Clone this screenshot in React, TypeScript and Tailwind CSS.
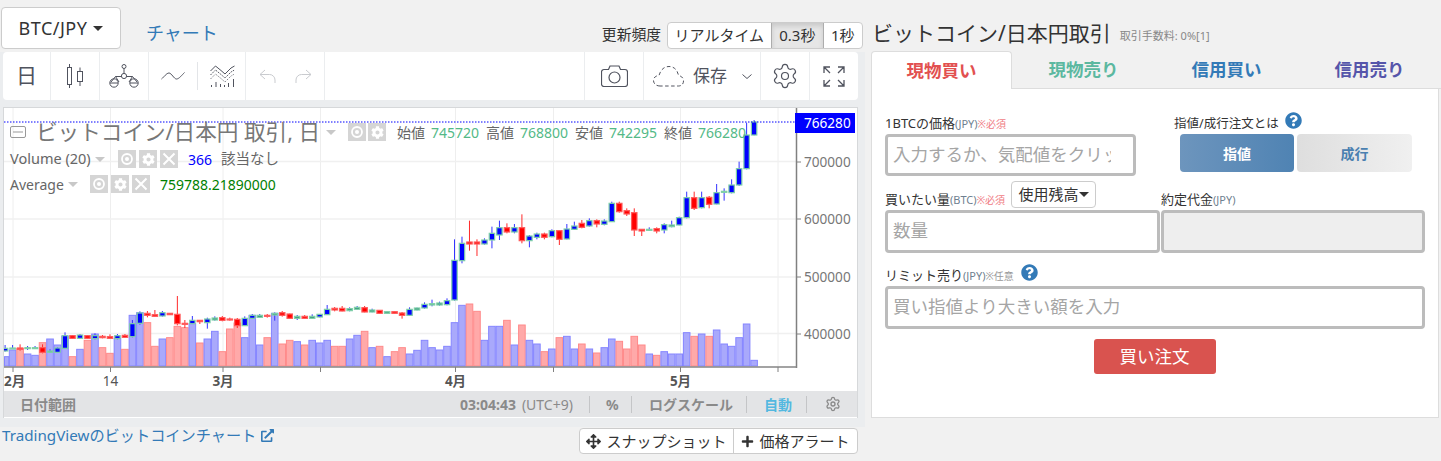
import { Settings } from "lucide-react";
import { FaArrowsAlt, FaCog, FaExternalLinkAlt, FaPlus, FaQuestionCircle } from "react-icons/fa";

// volume bars: top in 3x crop units (baseline 468), r = red
const volumes: [number, number][] = [
  [440,0],[420,0],[415,1],[432,0],[436,0],[398,1],[387,0],[405,0],[378,0],[440,1],[418,0],[391,1],[372,0],[413,1],[430,1],[385,0],[418,1],
  [316,0],[308,0],[338,1],[409,1],[387,0],[383,1],[349,1],[353,1],[341,0],[399,1],[387,0],[364,0],[425,1],[357,1],[339,1],[383,0],[316,0],
  [405,0],[383,1],[310,0],[402,1],[391,1],[395,0],[405,1],[391,0],[399,0],[391,0],[409,1],[409,1],[387,0],[376,0],[364,1],[413,0],[409,1],
  [440,0],[425,1],[413,1],[432,0],[421,0],[391,0],[413,0],[420,0],[409,0],[338,0],[286,0],[282,1],[304,1],[391,0],[349,0],[349,0],[331,1],
  [405,0],[345,1],[391,0],[402,0],[425,1],[417,0],[383,1],[379,0],[417,0],[402,1],[417,0],[429,1],[413,0],[387,0],[394,1],[417,1],[379,1],
  [405,1],[432,0],[436,1],[425,0],[432,0],[432,0],[368,0],[379,1],[372,0],[379,1],[360,0],[402,0],[409,0],[383,0],[342,0],[451,0],
];

// candles: body top, body bottom, wick top, wick bottom, up
const candles: [number, number, number, number, number][] = [
  [415,423,405,425,1],[414,416,405,417,1],[414,418,403,422,0],[413,415,408,420,1],[413,415,408,416,1],[413,427,403,430,0],[423,427,418,428,1],[414,427,412,428,1],
  [377,415,367,416,1],[377,385,375,386,0],[375,385,372,386,1],[377,385,376,386,0],[377,386,370,388,1],[379,383,375,385,0],[380,385,373,386,0],[377,386,372,388,1],
  [376,382,372,384,0],[341,380,330,382,1],[309,340,304,344,1],[310,316,303,322,0],[314,319,300,320,0],[308,318,303,320,1],[310,314,309,315,0],[313,341,258,346,0],
  [340,343,330,354,0],[331,341,318,342,1],[331,335,330,342,0],[327,338,323,356,1],[324,330,319,332,1],[323,331,318,334,0],[327,330,323,332,0],[328,347,324,354,0],
  [325,347,319,348,1],[316,325,312,326,1],[316,322,312,323,1],[316,319,312,323,0],[310,315,307,332,1],[308,316,303,320,0],[312,325,311,326,0],[319,325,315,330,1],
  [319,325,315,326,0],[319,325,313,326,1],[313,321,312,322,1],[298,314,285,315,1],[295,300,291,304,0],[295,303,288,304,0],[296,302,292,304,1],[292,298,288,300,1],
  [293,306,288,307,0],[300,306,296,307,1],[301,310,300,311,0],[305,310,304,311,1],[305,310,304,311,0],[309,316,306,326,0],[298,316,292,318,1],[294,300,293,301,1],
  [283,294,277,296,1],[281,285,269,289,1],[279,285,275,287,1],[272,284,265,286,1],[151,270,88,272,1],[100,152,80,160,1],[96,102,32,122,0],[96,102,88,138,0],
  [90,102,85,104,1],[70,90,50,115,1],[53,75,32,90,1],[53,66,40,70,0],[53,66,42,70,1],[53,92,13,100,0],[78,92,75,112,1],[72,82,68,88,1],[72,82,68,88,0],
  [62,80,58,82,1],[62,88,60,105,0],[57,87,42,88,1],[48,58,35,60,1],[40,52,30,55,0],[32,48,25,50,1],[32,42,28,52,0],[33,43,28,46,1],[-20,35,-25,36,1],
  [-20,5,-25,8,0],[2,12,-5,18,0],[8,60,-5,78,0],[58,63,58,78,0],[58,60,52,62,1],[56,63,52,70,0],[44,60,40,70,1],[45,50,32,52,1],[23,45,20,46,1],[-37,23,-55,25,1],
  [-37,-5,-55,0,0],[-37,-7,-55,-5,1],[-38,-17,-42,-5,0],[-52,-18,-78,-17,1],[-56,-54,-65,-28,1],[-75,-52,-92,-50,1],[-124,-75,-145,-72,1],[-225,-124,-262,-122,1],[-264,-225,-270,-224,1],
];

const toY = (z: number) => 210 + z / 3;
const toX = (i: number) => 5.1 + 7.49 * i;

const gridX = [13, 110.5, 223, 320.5, 455.5, 553.5, 680.5, 778];
const gridY = [161.5, 219, 277, 333.5];
const prices = [
  { label: "700000", y: 162 },
  { label: "600000", y: 219 },
  { label: "500000", y: 277 },
  { label: "400000", y: 334 },
];
const months = [
  { label: "2月", x: 14.6, bold: true },
  { label: "14", x: 110.5, bold: false },
  { label: "3月", x: 223, bold: true },
  { label: "4月", x: 455.5, bold: true },
  { label: "5月", x: 680.5, bold: true },
];

function Chart() {
  return (
    <svg viewBox="4 108 853 283" className="block h-[283px] w-[853px]">
      {gridX.map((x) => (
        <line key={x} x1={x} x2={x} y1={108} y2={367} stroke="#eeeeee" strokeWidth={1} />
      ))}
      {gridY.map((y) => (
        <line key={y} x1={4} x2={796} y1={y} y2={y} stroke="#f0f0f0" strokeWidth={1.5} />
      ))}
      {volumes.map(([top, red], i) => (
        <rect
          key={i}
          x={Math.max(toX(i) - 3.3, 4.5)}
          width={i === 0 ? 4.5 : 6.6}
          y={toY(top)}
          height={366 - toY(top)}
          fill={red ? "#ffa9a9" : "#a9a9fb"}
          stroke={red ? "#ff8a8a" : "#8585ff"}
          strokeWidth={1}
        />
      ))}
      {candles.map(([top, bottom, wickTop, wickBottom, up], i) => (
        <g key={i}>
          <line
            x1={toX(i)}
            x2={toX(i)}
            y1={toY(wickTop)}
            y2={toY(wickBottom)}
            stroke={up ? "#3333ff" : "#ff2a2a"}
            strokeWidth={1}
          />
          <rect
            x={toX(i) - 2.7}
            width={5.4}
            y={toY(top)}
            height={Math.max((bottom - top) / 3, 1)}
            fill={up ? (bottom - top <= 7 ? "#2f8f78" : "#0000ff") : "#ff0000"}
            stroke={up ? "#7fd0a8" : "#ff5a5a"}
            strokeWidth={1.2}
          />
        </g>
      ))}
      <line x1={4} x2={796} y1={122} y2={122} stroke="#0000ff" strokeWidth={1} strokeDasharray="1.5 1.5" />
      <line x1={796.5} x2={796.5} y1={108} y2={368} stroke="#808080" strokeWidth={1.5} />
      <line x1={4} x2={797} y1={367} y2={367} stroke="#858585" strokeWidth={1.5} />
      {gridX.map((x) => (
        <line key={x} x1={x} x2={x} y1={367} y2={372} stroke="#808080" strokeWidth={1} />
      ))}
      {prices.map((p) => (
        <g key={p.label}>
          <line x1={797} x2={801} y1={p.y} y2={p.y} stroke="#808080" strokeWidth={1} />
          <text x={804} y={p.y + 5} fontSize={13.6} fill="#777777">
            {p.label}
          </text>
        </g>
      ))}
      <rect x={795} y={113} width={60} height={20} fill="#0000ff" />
      <text x={804} y={128} fontSize={13.6} fill="#ffffff">
        766280
      </text>
      {months.map((m) => (
        <text
          key={m.label}
          x={m.x}
          y={386}
          fontSize={13.5}
          textAnchor="middle"
          fontWeight={m.bold ? 700 : 400}
          fill="#555555"
        >
          {m.label}
        </text>
      ))}
    </svg>
  );
}

function Eye() {
  return (
    <svg viewBox="0 0 18 18" className="h-[18px] w-[18px]">
      <circle cx={9} cy={9} r={5} fill="none" stroke="#ffffff" strokeWidth={1.8} />
      <circle cx={9} cy={9} r={2} fill="#ffffff" />
    </svg>
  );
}

function Cross() {
  return (
    <svg viewBox="0 0 18 18" className="h-[18px] w-[18px]">
      <path d="M3.5 3.5 14.5 14.5M14.5 3.5 3.5 14.5" stroke="#ffffff" strokeWidth={2} />
    </svg>
  );
}

function LegendBox({ children }: { children: React.ReactNode }) {
  return <div className="flex h-[18px] w-[18px] items-center justify-center bg-[#d5d5d5] text-white">{children}</div>;
}

function Caret({ className }: { className: string }) {
  return <span className={`h-0 w-0 border-x-[5px] border-t-[5px] border-x-transparent ${className}`} />;
}

function Ohlc({ label, value, width }: { label: string; value: string; width: string }) {
  return (
    <span className={`flex gap-[6px] text-[14px] ${width}`}>
      <span className="text-[#666666]">{label}</span>
      <span className="text-[#53b987]">{value}</span>
    </span>
  );
}

function Legend() {
  return (
    <div className="absolute top-[12px] left-[6px] whitespace-nowrap">
      <div className="flex h-[24px] items-center">
        <svg viewBox="0 0 16 12" className="h-[12px] w-[16px]">
          <rect x={0.5} y={0.5} width={15} height={11} rx={1.5} fill="none" stroke="#999999" />
          <line x1={3} x2={13} y1={6} y2={6} stroke="#999999" />
        </svg>
        <span className="ml-[10px] w-[290px] text-[21.6px] leading-[24px] text-[#777777]">ビットコイン/日本円 取引, 日</span>
        <Caret className="border-t-[#c8c8c8]" />
        <div className="ml-[12px] flex gap-[2px]">
          <LegendBox>
            <Eye />
          </LegendBox>
          <LegendBox>
            <FaCog size={13} />
          </LegendBox>
        </div>
        <div className="ml-[11px] flex">
          <Ohlc label="始値" value="745720" width="w-[89px]" />
          <Ohlc label="高値" value="768800" width="w-[89px]" />
          <Ohlc label="安値" value="742295" width="w-[89px]" />
          <Ohlc label="終値" value="766280" width="w-[89px]" />
        </div>
      </div>
      <div className="mt-[3px] flex h-[24px] items-center text-[14.5px] text-[#666666]">
        <span className="w-[85px]">Volume (20)</span>
        <Caret className="border-t-[#c8c8c8]" />
        <div className="ml-[13px] flex gap-[3px]">
          <LegendBox>
            <Eye />
          </LegendBox>
          <LegendBox>
            <FaCog size={13} />
          </LegendBox>
          <LegendBox>
            <Cross />
          </LegendBox>
        </div>
        <span className="ml-[10px] text-[14px] text-[#0000ff]">366</span>
        <span className="ml-[9px]">該当なし</span>
      </div>
      <div className="mt-[1px] flex h-[24px] items-center text-[14px] text-[#666666]">
        <span className="w-[58px]">Average</span>
        <Caret className="border-t-[#c8c8c8]" />
        <div className="ml-[12px] flex gap-[3px]">
          <LegendBox>
            <Eye />
          </LegendBox>
          <LegendBox>
            <FaCog size={13} />
          </LegendBox>
          <LegendBox>
            <Cross />
          </LegendBox>
        </div>
        <span className="ml-[10px] text-[#008000]">759788.21890000</span>
      </div>
    </div>
  );
}

function CandleIcon() {
  return (
    <svg viewBox="0 0 16 24" className="h-[24px] w-[16px]" fill="none" stroke="#50535e">
      <rect x={0.5} y={3.5} width={4} height={17} />
      <path d="M2.5 0v3.5M2.5 20.5V24" />
      <rect x={10.5} y={7.5} width={5} height={10} />
      <path d="M13 3.5v4M13 17.5V22" />
    </svg>
  );
}

function BalanceIcon() {
  return (
    <svg viewBox="0 0 30 24" className="h-[24px] w-[30px]" fill="none" stroke="#50535e">
      <circle cx={15} cy={2.5} r={2} />
      <path d="M15 4.5v5" />
      <circle cx={15} cy={12} r={2.6} />
      <path d="M12.5 12.5H6.5L2 18M6.5 12.5 10 18M17.5 12.5H23.5L20 18M23.5 12.5 28 18" />
      <circle cx={5} cy={19} r={4.2} />
      <circle cx={25} cy={19} r={4.2} />
      <path d="M1 19h8M21 19h8" />
    </svg>
  );
}

function WaveIcon() {
  return (
    <svg viewBox="0 0 24 10" className="h-[10px] w-[24px]" fill="none" stroke="#50535e">
      <path d="M0.5 8C3 6 5.5 2 8 2c2.500 0 5 6 7.500 6 2.500 0 5.500-4 8-6.500" />
    </svg>
  );
}

function IndicatorIcon() {
  return (
    <svg viewBox="0 0 25 23" className="h-[23px] w-[25px]" fill="none" stroke="#50535e">
      <path d="M0.500 6 5.500 1 11 5.500 15 9 21 3 24.500 1" />
      <path d="M0.500 10 5.500 5 11 9.500 15 13 21 7 24.500 5" strokeDasharray="1.500 1" />
      <path d="M0.500 14 5.500 9 11 13.500 15 17 21 11 24.500 9" strokeDasharray="1 1.500" />
      <path d="M1.500 22v-2M6 22v-5M10.500 22v-3M14.500 22v-2M18.500 22v-4M23.500 22v-8" />
    </svg>
  );
}

function UndoIcon({ flip }: { flip?: boolean }) {
  return (
    <svg viewBox="0 0 17 15" className={`h-[15px] w-[17px] ${flip ? "-scale-x-100" : ""}`} fill="none" stroke="#c9cbcf">
      <path d="M6 1 1 5.500 6 10M1 5.500h9.500a5.500 5.500 0 0 1 5.500 5.500v3" />
    </svg>
  );
}

function CameraIcon() {
  return (
    <svg viewBox="0 0 27 22" className="h-[22px] w-[27px]" fill="none" stroke="#50535e" strokeWidth={1.2}>
      <path d="M3 4.500h4.500L9 1h9l1.500 3.500H24a2.500 2.500 0 0 1 2.500 2.500v12a2.500 2.500 0 0 1-2.500 2.500H3A2.500 2.500 0 0 1 .500 19V7A2.500 2.500 0 0 1 3 4.500Z" />
      <circle cx={13.500} cy={12.500} r={5.500} />
    </svg>
  );
}

function CloudIcon() {
  return (
    <svg viewBox="0 0 31 21" className="h-[21px] w-[31px]" fill="none" stroke="#50535e" strokeDasharray="3.500 2.500">
      <path d="M7 20C3 20 .500 17.500 .500 14.500 .500 11.500 3 9.500 6 9.500 7.500 4 11 .500 16 .500c5 0 8.500 3.500 9.500 9 3 .5 5 2.500 5 5.500 0 3-2 5-5 5H7Z" />
    </svg>
  );
}

function ExpandIcon() {
  return (
    <svg viewBox="0 0 22 21" className="h-[21px] w-[22px]" fill="none" stroke="#50535e" strokeWidth={1.3}>
      <path d="M1 7V1h6M1 1l6 6M15 1h6v6M21 1l-6 6M1 14v6h6M1 20l6-6M21 14v6h-6M21 20l-6-6" />
    </svg>
  );
}

function Toolbar() {
  return (
    <div className="ml-[3px] flex h-[48px] w-[855px] gap-[1px] text-[#50535e]">
      <div className="flex w-[47px] items-center justify-center rounded-l bg-white text-[21px]">日</div>
      <div className="flex w-[48px] items-center justify-center bg-white">
        <CandleIcon />
      </div>
      <div className="flex w-[48px] items-center justify-center bg-white">
        <BalanceIcon />
      </div>
      <div className="flex w-[96px] items-center bg-white pl-[12px]">
        <WaveIcon />
        <div className="ml-[12px] h-[28px] w-[1px] bg-[#e3e5e8]" />
        <div className="ml-[12px]">
          <IndicatorIcon />
        </div>
      </div>
      <div className="flex w-[78px] items-center justify-center gap-[19px] bg-white">
        <UndoIcon />
        <UndoIcon flip />
      </div>
      <div className="w-[259px] bg-white" />
      <div className="flex w-[58px] items-center justify-center bg-white">
        <CameraIcon />
      </div>
      <div className="flex w-[116px] items-center bg-white pl-[9px]">
        <CloudIcon />
        <span className="ml-[9px] text-[17px]">保存</span>
        <svg viewBox="0 0 10 5" className="ml-[15px] h-[5px] w-[10px]" fill="none" stroke="#50535e">
          <path d="M.5.5 5 4.500 9.500.5" />
        </svg>
      </div>
      <div className="flex w-[48px] items-center justify-center bg-white">
        <Settings size={28} strokeWidth={1} color="#50535e" />
      </div>
      <div className="flex w-[48px] items-center justify-center rounded-r bg-white">
        <ExpandIcon />
      </div>
    </div>
  );
}

function FooterSep() {
  return <div className="h-[17px] w-[1px] bg-[#c4c5c7]" />;
}

function ChartFooter() {
  return (
    <div className="flex h-[26px] items-center bg-[#e3e4e6] text-[14px] text-[#8a8a8a]">
      <span className="ml-[16px] font-bold">日付範囲</span>
      <span className="ml-[384px] font-bold">03:04:43</span>
      <span className="ml-[6px]">(UTC+9)</span>
      <div className="ml-[16px]">
        <FooterSep />
      </div>
      <span className="ml-[16px] w-[10px] font-bold">%</span>
      <div className="ml-[15px]">
        <FooterSep />
      </div>
      <span className="ml-[17px] font-bold">ログスケール</span>
      <div className="ml-[13px]">
        <FooterSep />
      </div>
      <span className="ml-[17px] font-bold text-[#53b8e0]">自動</span>
      <div className="ml-[14px]">
        <FooterSep />
      </div>
      <Settings size={16} strokeWidth={2} className="ml-[18px] text-[#8a8a8a]" />
    </div>
  );
}

function RateSwitch() {
  return (
    <div className="flex h-[27px] overflow-hidden rounded border border-[#cccccc] bg-white text-[15px] text-[#333333]">
      <div className="flex w-[103px] items-center justify-center">リアルタイム</div>
      <div className="flex w-[53px] items-center justify-center border-x border-[#adadad] bg-[#e6e6e6] shadow-[inset_0_3px_5px_rgba(0,0,0,0.125)]">
        0.3秒
      </div>
      <div className="flex w-[38px] items-center justify-center">1秒</div>
    </div>
  );
}

function LeftColumn() {
  return (
    <div className="w-[871px] shrink-0">
      <div className="flex h-[52px]">
        <div className="ml-[1px] mt-[7px] flex h-[42px] w-[120px] items-center justify-center gap-[6px] rounded border border-[#cccccc] bg-white text-[18px] tracking-[0.5px] text-[#333333]">
          BTC/JPY
          <Caret className="border-t-[#333333]" />
        </div>
        <span className="ml-[25px] mt-[20px] text-[18px] leading-[26px] text-[#337ab7]">チャート</span>
        <span className="ml-[384px] mt-[24px] w-[59px] whitespace-nowrap text-[14.8px] leading-[20px] text-[#333333]">更新頻度</span>
        <div className="ml-[6px] mt-[22px]">
          <RateSwitch />
        </div>
      </div>
      <div className="h-[375px] w-[865px] bg-[#ebedef]">
        <Toolbar />
        <div className="relative ml-[3px] mt-[7px] w-[855px] border-x border-t border-[#d6d8da] bg-white">
          <Chart />
          <Legend />
          <ChartFooter />
          <div className="h-[1px] bg-white" />
        </div>
      </div>
      <div className="flex items-start justify-between">
        <div className="ml-[2px] mt-[-2px] flex items-center gap-[5px] text-[15.2px] leading-[20px] text-[#337ab7]">
          TradingViewのビットコインチャート
          <FaExternalLinkAlt size={13} />
        </div>
        <div className="mr-[13px] mt-[1px] flex h-[26px] rounded border border-[#cccccc] bg-white text-[15px] text-[#333333]">
          <div className="flex w-[154px] items-center justify-center gap-[5px] border-r border-[#cccccc]">
            <FaArrowsAlt size={15} />
            スナップショット
          </div>
          <div className="flex w-[123px] items-center justify-center gap-[5px]">
            <FaPlus size={13} />
            価格アラート
          </div>
        </div>
      </div>
    </div>
  );
}

function Label({ name, unit, note, noteClass }: { name: string; unit: string; note?: string; noteClass?: string }) {
  return (
    <span className="whitespace-nowrap text-[13px] text-[#333333]">
      {name}
      <span className="text-[11px] text-[#6f7f90]">{unit}</span>
      {note && <span className={`text-[10px] ${noteClass}`}>{note}</span>}
    </span>
  );
}

const fieldClass =
  "block h-full w-full rounded border-[3px] border-[#bcbcbc] pb-[3px] pl-[5px] text-[17.5px] text-[#333333] outline-none placeholder:text-[#a5a5a5]";

function OrderPanel() {
  return (
    <div className="h-[329px] w-[568px] border-x border-b border-[#dddddd] bg-white pl-[13px] pt-[25px]">
      <div className="flex h-[62px]">
        <div className="w-[251px]">
          <div className="flex h-[20px] items-center">
            <Label name="1BTCの価格" unit="(JPY)" note="※必須" noteClass="text-[#f07c84]" />
          </div>
          <div className="h-[42px]">
            <input className={`${fieldClass} bg-white pr-[22px]`} placeholder="入力するか、気配値をクリック" readOnly />
          </div>
        </div>
        <div className="ml-[38px] mt-[-3px]">
          <div className="flex h-[23px] items-center gap-[6px]">
            <span className="mt-[4px] text-[12.5px] text-[#333333]">指値/成行注文とは</span>
            <FaQuestionCircle size={17} className="mb-[4px] text-[#337ab7]" />
          </div>
          <div className="ml-[6px] flex h-[38px] gap-[3px] text-[14px] font-bold">
            <div className="flex w-[114px] items-center justify-center rounded bg-gradient-to-r from-[#6d95bd] to-[#4f83b3] text-white">指値</div>
            <div className="flex w-[115px] items-center justify-center rounded bg-gradient-to-r from-[#dedede] to-[#f0f0f0] text-[#4a80b0]">成行</div>
          </div>
        </div>
      </div>
      <div className="mt-[5px] flex h-[29px] items-start">
        <div className="flex h-[27px] w-[276px] items-center">
          <div className="mt-[6px] w-[126px]">
            <Label name="買いたい量" unit="(BTC)" note="※必須" noteClass="text-[#f07c84]" />
          </div>
          <div className="flex h-[27px] w-[85px] items-center justify-center rounded border border-[#cccccc] text-[15px] text-[#333333]">
            使用残高
            <span className="h-0 w-0 border-x-[5px] border-t-[5px] border-x-transparent border-t-[#333333]" />
          </div>
        </div>
        <div className="mt-[5px]">
          <Label name="約定代金" unit="(JPY)" />
        </div>
      </div>
      <div className="flex h-[43px] w-[540px] gap-[1px]">
        <div className="w-[275px]">
          <input className={`${fieldClass} bg-white`} placeholder="数量" readOnly />
        </div>
        <div className="w-[264px]">
          <input className={`${fieldClass} bg-[#eeeeee]`} readOnly />
        </div>
      </div>
      <div className="mt-[10px] flex h-[23px] items-center gap-[7px]">
        <div className="mt-[-2px]">
          <Label name="リミット売り" unit="(JPY)" note="※任意" noteClass="text-[#999999]" />
        </div>
        <FaQuestionCircle size={17} className="mb-[5px] text-[#337ab7]" />
      </div>
      <div className="h-[43px] w-[540px]">
        <input className={`${fieldClass} bg-white`} placeholder="買い指値より大きい額を入力" readOnly />
      </div>
      <div className="mt-[10px] flex w-[539px] justify-center">
        <div className="flex h-[35px] w-[122px] items-center justify-center rounded-[3px] bg-[#d9534f] text-[17.5px] text-white">買い注文</div>
      </div>
    </div>
  );
}

const tabs = [
  { label: "現物買い", color: "text-[#e25050]", width: "w-[141px]", active: true },
  { label: "現物売り", color: "text-[#5cb8a0]", width: "w-[143px]", active: false },
  { label: "信用買い", color: "text-[#337ab7]", width: "w-[143px]", active: false },
  { label: "信用売り", color: "text-[#5555aa]", width: "w-[143px]", active: false },
];

function RightColumn() {
  return (
    <div className="w-[570px] shrink-0 pt-[16px]">
      <div className="flex h-[35px] items-center">
        <span className="ml-[1px] text-[21px] text-[#333333]">ビットコイン/日本円取引</span>
        <span className="ml-[9px] mt-[6px] text-[11px] text-[#888888]">取引手数料: 0%[1]</span>
      </div>
      <div className="flex h-[38px]">
        {tabs.map((t) => (
          <div
            key={t.label}
            className={`flex items-center justify-center text-[17.5px] font-bold ${t.width} ${t.color} ${
              t.active ? "rounded-t border-x border-t border-[#dddddd] bg-white" : "border-b border-[#dddddd]"
            }`}
          >
            {t.label}
          </div>
        ))}
      </div>
      <OrderPanel />
    </div>
  );
}

export default function App() {
  return (
    <div className="flex h-[461px] w-[1441px] overflow-hidden bg-[#f1f1f1] font-['Noto_Sans','Noto_Sans_CJK_JP',sans-serif]">
      <LeftColumn />
      <RightColumn />
    </div>
  );
}
